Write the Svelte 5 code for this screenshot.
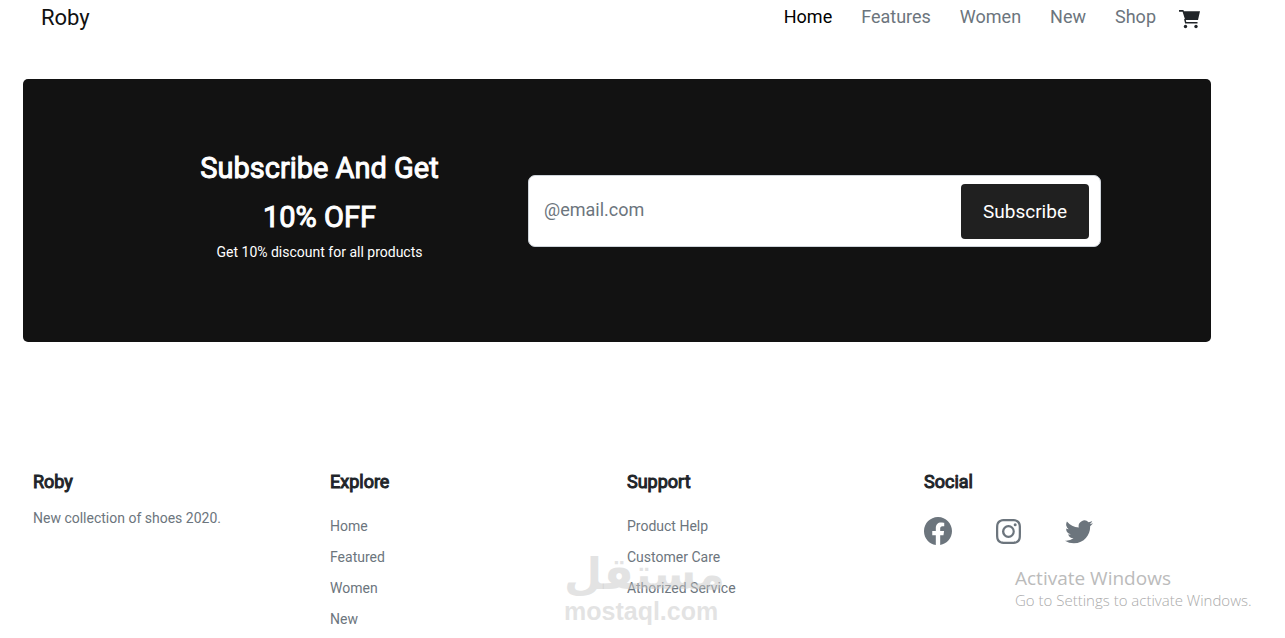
<script>
  let email = $state('');

  const brand = 'Roby';

  const navLinks = ['Home', 'Features', 'Women', 'New', 'Shop'];

  const columns = [
    { title: 'Explore', links: ['Home', 'Featured', 'Women', 'New'] },
    { title: 'Support', links: ['Product Help', 'Customer Care', 'Athorized Service'] }
  ];

  // 16x16 icon paths
  const social = [
    {
      name: 'Facebook',
      size: 28,
      path: 'M16 8.049c0-4.446-3.582-8.05-8-8.05C3.58 0-.002 3.603-.002 8.05c0 4.017 2.926 7.347 6.75 7.951v-5.625h-2.03V8.05H6.75V6.275c0-2.017 1.195-3.131 3.022-3.131.876 0 1.791.157 1.791.157v1.98h-1.009c-.993 0-1.303.621-1.303 1.258v1.51h2.218l-.354 2.326H9.25V16c3.824-.604 6.75-3.934 6.75-7.951z'
    },
    {
      name: 'Instagram',
      size: 25,
      path: 'M8 0C5.829 0 5.556.01 4.703.048 3.85.088 3.269.222 2.76.42a3.917 3.917 0 0 0-1.417.923A3.927 3.927 0 0 0 .42 2.76C.222 3.268.087 3.85.048 4.7.01 5.555 0 5.827 0 8.001c0 2.172.01 2.444.048 3.297.04.852.174 1.433.372 1.942.205.526.478.972.923 1.417.444.445.89.719 1.416.923.51.198 1.09.333 1.942.372C5.555 15.99 5.827 16 8 16s2.444-.01 3.298-.048c.851-.04 1.434-.174 1.943-.372a3.916 3.916 0 0 0 1.416-.923c.445-.445.718-.891.923-1.417.197-.509.332-1.09.372-1.942C15.99 10.445 16 10.173 16 8s-.01-2.445-.048-3.299c-.04-.851-.175-1.433-.372-1.941a3.926 3.926 0 0 0-.923-1.417A3.911 3.911 0 0 0 13.24.42c-.51-.198-1.092-.333-1.943-.372C10.443.01 10.172 0 7.998 0h.003zm-.717 1.442h.718c2.136 0 2.389.007 3.232.046.78.035 1.204.166 1.486.275.373.145.64.319.92.599.28.28.453.546.598.92.11.281.24.705.275 1.485.039.843.047 1.096.047 3.231s-.008 2.389-.047 3.232c-.035.78-.166 1.203-.275 1.485a2.47 2.47 0 0 1-.599.919c-.28.28-.546.453-.92.598-.28.11-.704.24-1.485.276-.843.038-1.096.047-3.232.047s-2.39-.009-3.233-.047c-.78-.036-1.203-.166-1.485-.276a2.478 2.478 0 0 1-.92-.598 2.48 2.48 0 0 1-.6-.92c-.109-.281-.24-.705-.275-1.485-.038-.843-.046-1.096-.046-3.233 0-2.136.008-2.388.046-3.231.036-.78.166-1.204.276-1.486.145-.373.319-.64.599-.92.28-.28.546-.453.92-.598.282-.11.705-.24 1.485-.276.738-.034 1.024-.044 2.515-.045v.002zm4.988 1.328a.96.96 0 1 0 0 1.92.96.96 0 0 0 0-1.92zm-4.27 1.122a4.109 4.109 0 1 0 0 8.217 4.109 4.109 0 0 0 0-8.217zm0 1.441a2.667 2.667 0 1 1 0 5.334 2.667 2.667 0 0 1 0-5.334z'
    },
    {
      name: 'Twitter',
      size: 28,
      path: 'M5.026 15c6.038 0 9.341-5.003 9.341-9.334 0-.14 0-.282-.006-.422A6.685 6.685 0 0 0 16 3.542a6.658 6.658 0 0 1-1.889.518 3.301 3.301 0 0 0 1.447-1.817 6.533 6.533 0 0 1-2.087.793A3.286 3.286 0 0 0 7.875 6.03a9.325 9.325 0 0 1-6.767-3.429 3.289 3.289 0 0 0 1.018 4.382A3.323 3.323 0 0 1 .64 6.575v.045a3.288 3.288 0 0 0 2.632 3.218 3.203 3.203 0 0 1-.865.115 3.23 3.23 0 0 1-.614-.057 3.283 3.283 0 0 0 3.067 2.277A6.588 6.588 0 0 1 .78 13.58a6.32 6.32 0 0 1-.78-.045A9.344 9.344 0 0 0 5.026 15z'
    }
  ];
</script>

<div class="page">
  <header class="navbar">
    <a class="brand" href="#home">{brand}</a>
    <nav class="links">
      {#each navLinks as link, i}
        <a href="#{link.toLowerCase()}" class:active={i === 0}>{link}</a>
      {/each}
    </nav>
    <a class="cart" href="#cart" aria-label="Cart">
      <svg width="22" height="20" viewBox="0 0 22 20">
        <path d="M0 1h4.4l.5 1.2H21L19 11H6.2L3.6 2.8H0z" fill="currentColor" />
        <path d="M5.8 10l.9 3.8h11.8" fill="none" stroke="currentColor" stroke-width="1.5" />
        <circle cx="6.5" cy="17.5" r="1.7" fill="currentColor" />
        <circle cx="17" cy="17.5" r="1.7" fill="currentColor" />
      </svg>
    </a>
  </header>

  <section class="promo">
    <div class="promo-text">
      <h1>Subscribe And Get<br />10% OFF</h1>
      <p>Get 10% discount for all products</p>
    </div>
    <form class="subscribe" onsubmit={(e) => e.preventDefault()}>
      <input type="email" aria-label="Email" placeholder="@email.com" bind:value={email} />
      <button type="submit">Subscribe</button>
    </form>
  </section>

  <footer class="footer">
    <div class="col">
      <h2>{brand}</h2>
      <p>New collection of shoes 2020.</p>
    </div>
    {#each columns as column}
      <div class="col">
        <h2>{column.title}</h2>
        <ul>
          {#each column.links as link}
            <li><a href="#footer">{link}</a></li>
          {/each}
        </ul>
      </div>
    {/each}
    <div class="col">
      <h2>Social</h2>
      <div class="social">
        {#each social as item}
          <a href="#social" aria-label={item.name}>
            <svg width={item.size} height={item.size} viewBox="0 0 16 16" fill="currentColor">
              <path d={item.path} />
            </svg>
          </a>
        {/each}
      </div>
    </div>
  </footer>
</div>

<div class="watermark">
  <span class="arabic" lang="ar" dir="rtl">مستقل</span>
  <span class="latin">mostaql.com</span>
</div>

<div class="activate">
  <strong>Activate Windows</strong>
  <span>Go to Settings to activate Windows.</span>
</div>

<style>
  :global(body) {
    background: #fff;
    overflow: hidden;
  }

  .page {
    padding: 0 74px 0 23px;
    color: #212529;
    font-family: Roboto, sans-serif;
  }

  a {
    color: inherit;
    text-decoration: none;
  }

  svg {
    display: block;
  }

  h1,
  h2,
  p,
  ul {
    margin: 0;
    padding: 0;
  }

  /* navbar */

  .navbar {
    display: flex;
    align-items: center;
    height: 37px;
    padding: 0 10px 0 18px;
  }

  .brand {
    margin-right: auto;
    padding-bottom: 3px;
    color: #111;
    font-size: 22px;
  }

  .links {
    display: flex;
    gap: 29px;
    padding-bottom: 4px;
    color: #6c757d;
    font-size: 18px;
  }

  .links .active {
    color: #000;
  }

  .cart {
    margin-left: 23px;
  }

  /* subscribe banner */

  .promo {
    display: grid;
    grid-template-columns: 373fr 573fr;
    align-items: center;
    gap: 22px;
    margin-top: 42px;
    padding: 65px 110px 64px;
    border-radius: 5px;
    background: #121212;
    color: #fff;
  }

  .promo-text {
    text-align: center;
  }

  h1 {
    font-size: 29px;
    font-weight: 400;
    line-height: 49px;
    -webkit-text-stroke: 1px #fff;
  }

  .promo-text p {
    margin-bottom: 16px;
    font-size: 14px;
    line-height: 20px;
  }

  .subscribe {
    display: flex;
    box-sizing: border-box;
    height: 72px;
    padding: 8px 11px 7px 15px;
    border: 1px solid #ced4da;
    border-radius: 7px;
    background: #fff;
  }

  .subscribe input {
    flex: 1;
    min-width: 0;
    padding: 0 0 4px;
    border: none;
    outline: none;
    background: none;
    color: #212529;
    font: 18px Roboto, sans-serif;
  }

  .subscribe input::placeholder {
    color: #6c757d;
  }

  .subscribe button {
    width: 128px;
    border: none;
    border-radius: 4px;
    background: #202020;
    color: #fff;
    font: 19px Roboto, sans-serif;
  }

  /* footer */

  .footer {
    display: grid;
    grid-template-columns: repeat(4, 1fr);
    margin-top: 129px;
  }

  .col {
    padding: 0 10px;
    color: #6c757d;
    font-size: 14px;
  }

  h2 {
    margin-bottom: 15px;
    color: #212529;
    font-size: 18px;
    font-weight: 400;
    line-height: 22px;
    -webkit-text-stroke: 1px #212529;
  }

  .col p {
    line-height: 20px;
  }

  ul {
    padding-top: 3px;
    list-style: none;
  }

  li {
    line-height: 31px;
  }

  .social {
    display: flex;
    align-items: center;
    gap: 44px;
    padding-top: 9px;
  }

  /* overlays */

  .watermark {
    position: absolute;
    top: 550px;
    left: 564px;
    display: flex;
    flex-direction: column;
    align-items: flex-start;
    color: rgba(200, 200, 200, 0.5);
    font-weight: bold;
    pointer-events: none;
  }

  .arabic {
    font-family: "DejaVu Sans", sans-serif;
    font-size: 44px;
    line-height: 48px;
  }

  .latin {
    font-family: "Liberation Sans", sans-serif;
    font-size: 25px;
    line-height: 26px;
  }

  .activate {
    position: absolute;
    top: 566px;
    left: 1015px;
    display: flex;
    flex-direction: column;
    color: #bbb;
    font-family: "Open Sans", sans-serif;
    font-size: 15px;
    font-weight: 300;
    line-height: 19px;
    white-space: nowrap;
    pointer-events: none;
  }

  .activate span {
    color: #aaa;
  }

  .activate strong {
    font-size: 19px;
    font-weight: 400;
    line-height: 25px;
  }
</style>
